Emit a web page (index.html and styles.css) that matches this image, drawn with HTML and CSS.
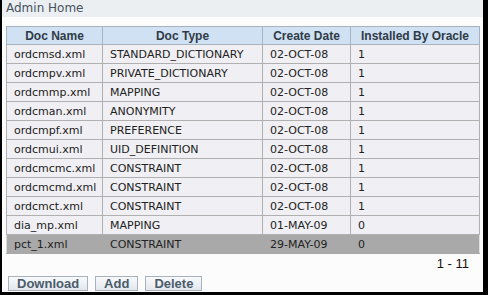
FILE: index.html
```html
<!DOCTYPE html>
<html>
<head><link rel="stylesheet" href="styles.css"></head>
<body>
<div class="frame">
  <div class="title">Admin Home</div>
  <div class="content">
    <table class="grid">
      <thead>
        <tr><th class="c1">Doc Name</th><th class="c2">Doc Type</th><th class="c3">Create Date</th><th class="c4">Installed By Oracle</th></tr>
      </thead>
      <tbody>
        <tr><td>ordcmsd.xml</td><td>STANDARD_DICTIONARY</td><td>02-OCT-08</td><td>1</td></tr>
        <tr><td>ordcmpv.xml</td><td>PRIVATE_DICTIONARY</td><td>02-OCT-08</td><td>1</td></tr>
        <tr><td>ordcmmp.xml</td><td>MAPPING</td><td>02-OCT-08</td><td>1</td></tr>
        <tr><td>ordcman.xml</td><td>ANONYMITY</td><td>02-OCT-08</td><td>1</td></tr>
        <tr><td>ordcmpf.xml</td><td>PREFERENCE</td><td>02-OCT-08</td><td>1</td></tr>
        <tr><td>ordcmui.xml</td><td>UID_DEFINITION</td><td>02-OCT-08</td><td>1</td></tr>
        <tr><td>ordcmcmc.xml</td><td>CONSTRAINT</td><td>02-OCT-08</td><td>1</td></tr>
        <tr><td>ordcmcmd.xml</td><td>CONSTRAINT</td><td>02-OCT-08</td><td>1</td></tr>
        <tr><td>ordcmct.xml</td><td>CONSTRAINT</td><td>02-OCT-08</td><td>1</td></tr>
        <tr><td>dia_mp.xml</td><td>MAPPING</td><td>01-MAY-09</td><td>0</td></tr>
        <tr class="sel"><td>pct_1.xml</td><td>CONSTRAINT</td><td>29-MAY-09</td><td>0</td></tr>
      </tbody>
    </table>
    <div class="range">1 - 11</div>
    <div class="buttons">
      <button class="btn">Download</button>
      <button class="btn">Add</button>
      <button class="btn">Delete</button>
    </div>
  </div>
</div>
</body>
</html>
```
FILE: styles.css
```css
html, body { margin: 0; padding: 0; background: #000; }
body { width: 488px; height: 295px; overflow: hidden; font-family: "DejaVu Sans", Verdana, sans-serif; font-size: 11px; }
.frame {
  margin-left: 2px;
  width: 481px;
  height: 292px;
  background: #fbfcfb;
  display: flex;
  flex-direction: column;
}
.title {
  height: 17px;
  line-height: 16px;
  background: #eceff2;
  color: #46525e;
  padding-left: 4px;
  font-size: 12px;
}
.content { padding: 9px 0 0 4px; display: flex; flex-direction: column; }
.grid {
  border-collapse: collapse;
  width: 474px;
  color: #222;
}
.grid th {
  background: #cfe1f3;
  height: 17px;
  font-family: "Liberation Sans", Arial, sans-serif;
  font-size: 12px;
  font-weight: bold;
  color: #2f3b47;
  border: 1px solid #a9b3bd;
  padding: 0;
  text-align: center;
}
.grid td {
  height: 18px;
  padding: 0 0 0 7px;
  border: 1px solid #b0b0b0;
  background: #f0eff3;
  white-space: nowrap;
}
.c1 { width: 95px; }
.c2 { width: 159px; }
.c3 { width: 87px; }
.grid tr.sel td { background: #a9a9a9; border-color: #a9a9a9; border-left-color: #5a5a5a; }
.grid tr.sel td:first-child { border-left-color: #d8d8d8; }
.grid tr.sel td:last-child { border-right-color: #e0e0e0; }
.range {
  text-align: right;
  padding-right: 14px;
  font-family: "Liberation Sans", Arial, sans-serif;
  font-size: 13px;
  height: 21px;
  line-height: 18px;
  margin-top: 1px;
  color: #111;
}
.buttons { display: flex; gap: 7px; margin-left: 2px; }
.btn {
  font-family: "Liberation Sans", Arial, sans-serif;
  font-size: 13px;
  font-weight: bold;
  color: #4b5b6c;
  background: linear-gradient(#f7f9fb, #e3e8ee);
  border: 1px solid #a7b2bd;
  height: 15px;
  line-height: 13px;
  padding: 0 8px;
  margin: 0;
}
```
